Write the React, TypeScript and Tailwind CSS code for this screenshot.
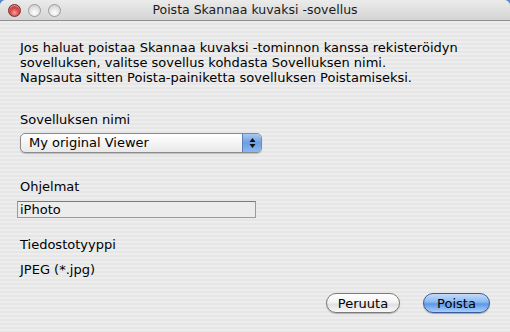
import React from "react";

const font = { fontFamily: '"DejaVu Sans", "Liberation Sans", sans-serif' };

function Light({ red }: { red?: boolean }) {
  return (
    <div
      className={
        red
          ? "w-[13px] h-[13px] rounded-full border border-[#7a2a2a] bg-[radial-gradient(circle_at_50%_70%,#f4a0a0_0%,#d84848_45%,#a02020_100%)] shadow-[inset_0_1px_1px_rgba(255,255,255,0.6)]"
          : "w-[13px] h-[13px] rounded-full border border-[#9a9a9a] bg-[radial-gradient(circle_at_50%_70%,#ffffff_0%,#e4e4e4_50%,#c4c4c4_100%)]"
      }
    />
  );
}

export default function App() {
  return (
    <div
      className="w-[510px] h-[332px] overflow-hidden bg-[#5a8ac8] text-black"
      style={font}
    >
      <div className="w-full h-full flex flex-col rounded-t-[6px] overflow-hidden bg-[#ececec]">
        <div className="h-[21px] shrink-0 relative flex items-center bg-[linear-gradient(#ebebeb,#d4d4d4)] border-b border-[#8f8f8f]">
          <div className="flex gap-[7px] pl-[8px]">
            <Light red />
            <Light />
            <Light />
          </div>
          <div className="absolute inset-0 flex items-center justify-center text-[12.5px] text-[#1a1a1a]">
            Poista Skannaa kuvaksi -sovellus
          </div>
        </div>
        <div className="flex-1 flex flex-col px-[20px] bg-[repeating-linear-gradient(#ededed_0px,#ededed_2px,#e6e6e6_2px,#e6e6e6_4px)] text-[13px]">
          <p className="mt-[19px] leading-[15px]">
            Jos haluat poistaa Skannaa kuvaksi -tominnon kanssa rekisteröidyn
            <br />
            sovelluksen, valitse sovellus kohdasta Sovelluksen nimi.
            <br />
            Napsauta sitten Poista-painiketta sovelluksen Poistamiseksi.
          </p>
          <div className="mt-[27px] leading-[15px]">Sovelluksen nimi</div>
          <div className="mt-[6px] w-[242px] h-[20px] flex rounded-[5px] border border-[#8a8a8a] bg-[linear-gradient(#ffffff,#f4f4f4_50%,#e8e8e8)] shadow-[0_1px_1px_rgba(0,0,0,0.2)] overflow-hidden">
            <div className="flex-1 flex items-center pl-[8px] text-[13px]">My original Viewer</div>
            <div className="w-[19px] flex flex-col items-center justify-center border-l border-[#5b7fb8] bg-[linear-gradient(#a8c8f0,#6c9ee0_50%,#8cb8f0)]">
              <svg width="7" height="12" viewBox="0 0 7 12">
                <path d="M3.5 1 L6.5 5 L0.5 5 Z" fill="#111" />
                <path d="M3.5 11 L6.5 7 L0.5 7 Z" fill="#111" />
              </svg>
            </div>
          </div>
          <div className="mt-[26px] leading-[15px]">Ohjelmat</div>
          <div className="mt-[7px] -ml-[3px] w-[239px] h-[17px] flex items-center pl-[2px] border border-[#9a9a9a] border-t-[#7a7a7a] bg-[#ececec] text-[13px]">
            iPhoto
          </div>
          <div className="mt-[19px] leading-[15px]">Tiedostotyyppi</div>
          <div className="mt-[10px] leading-[15px]">JPEG (*.jpg)</div>
          <div className="mt-[16px] flex justify-end gap-[23px]">
            <button className="w-[74px] h-[20px] rounded-full border border-[#7a7a7a] bg-[linear-gradient(#ffffff,#f2f2f2_50%,#e0e0e0_55%,#f8f8f8)] text-[13px] leading-none shadow-[0_1px_1px_rgba(0,0,0,0.25)]" style={font}>
              Peruuta
            </button>
            <button className="w-[67px] h-[20px] rounded-full border border-[#3a5a9a] bg-[linear-gradient(#c4dcf8,#8ab8f0_45%,#5c98e8_55%,#a8d0f8)] text-[13px] leading-none shadow-[0_1px_1px_rgba(0,0,0,0.3)]" style={font}>
              Poista
            </button>
          </div>
        </div>
      </div>
    </div>
  );
}
